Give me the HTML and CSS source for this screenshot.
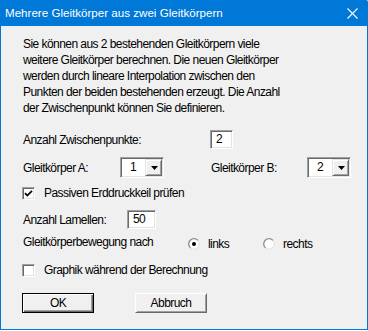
FILE: index.html
```html
<!DOCTYPE html>
<html lang="de">
<head>
<meta charset="utf-8">
<title>Mehrere Gleitkörper aus zwei Gleitkörpern</title>
<link rel="stylesheet" href="styles.css">
</head>
<body>
<div class="window">
  <div class="titlebar">
    <span class="title">Mehrere Gleitkörper aus zwei Gleitkörpern</span>
    <svg class="close" width="11" height="11" viewBox="0 0 11 11"><path d="M0.5 0.5 L10.5 10.5 M10.5 0.5 L0.5 10.5" stroke="#fff" stroke-width="1.1" fill="none"/></svg>
  </div>
  <div class="content">
    <p class="intro">Sie können aus 2 bestehenden Gleitkörpern viele<br>weitere Gleitkörper berechnen. Die neuen Gleitkörper<br>werden durch lineare Interpolation zwischen den<br>Punkten der beiden bestehenden erzeugt. Die Anzahl<br>der Zwischenpunkt können Sie definieren.</p>

    <div class="row row-zw">
      <span class="label label-zw">Anzahl Zwischenpunkte:</span>
      <span class="field field-zw">2</span>
    </div>

    <div class="row row-gk">
      <span class="label label-a">Gleitkörper A:</span>
      <span class="combo"><span class="combo-val">1</span><span class="combo-btn"><svg width="7" height="4" viewBox="0 0 7 4"><path d="M0 0 H7 L3.5 4 Z" fill="#000"/></svg></span></span>
      <span class="label label-b">Gleitkörper B:</span>
      <span class="combo"><span class="combo-val">2</span><span class="combo-btn"><svg width="7" height="4" viewBox="0 0 7 4"><path d="M0 0 H7 L3.5 4 Z" fill="#000"/></svg></span></span>
    </div>

    <div class="row row-check row-passiv">
      <span class="checkbox"><svg width="13" height="13" viewBox="0 0 13 13"><path d="M3 6.2 L5.3 8.6 L10 3.8" stroke="#000" stroke-width="1.7" fill="none"/></svg></span>
      <span class="check-text">Passiven Erddruckkeil prüfen</span>
    </div>

    <div class="row row-lam">
      <span class="label label-lam">Anzahl Lamellen:</span>
      <span class="field field-lam">50</span>
    </div>

    <div class="row row-radio">
      <span class="label label-bew">Gleitkörperbewegung nach</span>
      <span class="radio-item radio-links">
        <svg class="radio" width="12" height="12" viewBox="0 0 12 12">
          <defs><linearGradient id="rg" x1="0" y1="0" x2="1" y2="1"><stop offset="0.45" stop-color="#8a8a8a"/><stop offset="0.55" stop-color="#e3e3e3"/></linearGradient></defs>
          <circle cx="6" cy="6" r="5.3" fill="#fff" stroke="url(#rg)" stroke-width="1.3"/>
          <circle cx="6" cy="6" r="2" fill="#000"/>
        </svg>
        <span>links</span>
      </span>
      <span class="radio-item">
        <svg class="radio" width="12" height="12" viewBox="0 0 12 12">
          <circle cx="6" cy="6" r="5.3" fill="#fff" stroke="url(#rg)" stroke-width="1.3"/>
        </svg>
        <span>rechts</span>
      </span>
    </div>

    <div class="row row-check row-graphik">
      <span class="checkbox"></span>
      <span class="check-text">Graphik während der Berechnung</span>
    </div>

    <div class="row row-buttons">
      <span class="button button-default">OK</span>
      <span class="button button-cancel">Abbruch</span>
    </div>
  </div>
</div>
</body>
</html>
```

FILE: styles.css
```css
html, body {
  margin: 0;
  padding: 0;
  background: #ffffff;
}

body {
  font-family: "Liberation Sans", Arial, sans-serif;
  font-size: 12px;
  letter-spacing: -0.55px;
  color: #000;
}

.window {
  width: 368px;
  height: 330px;
  display: flex;
  flex-direction: column;
  background: #f0f0f0;
}

.titlebar {
  height: 26px;
  flex: none;
  background: #0078d7;
  color: #fff;
  display: flex;
  align-items: center;
  justify-content: space-between;
  padding: 0 10px 0 5px;
  font-family: "Liberation Sans", Arial, sans-serif;
  font-size: 11.6px;
  letter-spacing: 0;
  border-top-right-radius: 2px;
}

.title {
  line-height: 16px;
  white-space: nowrap;
}

.close {
  display: block;
  margin-top: 1px;
}

.content {
  flex: 1;
  border: 1px solid #0078d7;
  border-top: none;
  padding: 10px 0 0 22px;
  display: flex;
  flex-direction: column;
  align-items: flex-start;
}

.intro {
  margin: 0;
  line-height: 16px;
  white-space: nowrap;
}

.row {
  display: flex;
  align-items: center;
  line-height: 16px;
  white-space: nowrap;
}

.label {
  flex: none;
}

/* sunken edit box */
.field {
  box-sizing: border-box;
  height: 19px;
  background: #fff;
  border: 1px solid;
  border-color: #a0a0a0 #ffffff #ffffff #a0a0a0;
  box-shadow: inset 1px 1px 0 #696969, inset -1px -1px 0 #e3e3e3;
  padding: 0 0 0 5px;
  line-height: 17px;
}

.row-zw {
  margin-top: 14px;
  height: 19px;
}

.label-zw {
  width: 187px;
}

.field-zw {
  width: 23px;
}

.row-gk {
  margin-top: 8px;
  height: 21px;
}

.label-a {
  width: 97px;
}

.label-b {
  width: 96px;
  margin-left: 47px;
}

.combo {
  box-sizing: border-box;
  width: 44px;
  height: 21px;
  display: flex;
  background: #fff;
  border: 1px solid;
  border-color: #a0a0a0 #ffffff #ffffff #a0a0a0;
  box-shadow: inset 1px 1px 0 #696969, inset -1px -1px 0 #e3e3e3;
  padding: 1px;
}

.combo-val {
  flex: 1;
  padding-left: 8px;
  line-height: 17px;
}

.combo-btn {
  box-sizing: border-box;
  width: 17px;
  height: 17px;
  background: #f0f0f0;
  border: 1px solid;
  border-color: #e3e3e3 #696969 #696969 #e3e3e3;
  box-shadow: inset 1px 1px 0 #ffffff, inset -1px -1px 0 #a0a0a0;
  display: flex;
  align-items: center;
  justify-content: center;
}

.combo-btn svg {
  display: block;
  margin-left: 1px;
}

.row-check {
  height: 16px;
}

.row-passiv {
  margin-top: 7px;
}

.checkbox {
  box-sizing: border-box;
  width: 13px;
  height: 13px;
  margin-left: -1px;
  background: #fff;
  border: 1px solid;
  border-color: #a0a0a0 #ffffff #ffffff #a0a0a0;
  box-shadow: inset 1px 1px 0 #696969, inset -1px -1px 0 #e3e3e3;
  position: relative;
}

.checkbox svg {
  position: absolute;
  left: -1px;
  top: -1px;
}

.check-text {
  margin-left: 9px;
}

.row-lam {
  margin-top: 9px;
  height: 19px;
}

.label-lam {
  width: 104px;
}

.field-lam {
  width: 29px;
}

.row-radio {
  margin-top: 5px;
  height: 18px;
  align-items: flex-start;
}

.label-bew {
  width: 165px;
}

.radio-item {
  display: flex;
  align-items: center;
  margin-top: 2px;
}

.radio-links {
  width: 75px;
}

.radio {
  display: block;
  margin-right: 8px;
}

.row-graphik {
  margin-top: 10px;
}

.row-buttons {
  margin-top: 15px;
  height: 20px;
  margin-left: -1px;
}

.button {
  box-sizing: border-box;
  width: 72px;
  height: 20px;
  display: flex;
  align-items: center;
  justify-content: center;
  background: #f0f0f0;
  line-height: 16px;
}

.button-default {
  border: 1px solid #000;
  box-shadow: inset 1px 1px 0 #ffffff, inset -1px -1px 0 #696969, inset -2px -2px 0 #a0a0a0;
}

.button-cancel {
  margin-left: 41px;
  border: 1px solid;
  border-color: #ffffff #696969 #696969 #ffffff;
  box-shadow: inset 1px 1px 0 #f0f0f0, inset -1px -1px 0 #a0a0a0;
}
```
